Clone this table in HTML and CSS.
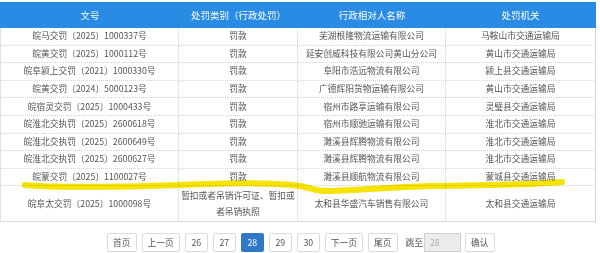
FILE: index.html
```html
<!DOCTYPE html>
<html lang="zh-CN">
<head>
<meta charset="utf-8">
<title>处罚列表</title>
<link rel="stylesheet" href="styles.css">
</head>
<body>
<div class="page">
  <div class="table">
    <div class="row head">
      <div class="c">文号</div>
      <div class="c">处罚类别（行政处罚）</div>
      <div class="c">行政相对人名称</div>
      <div class="c">处罚机关</div>
    </div>
    <div class="row">
      <div class="c">皖马交罚〔2025〕1000337号</div>
      <div class="c">罚款</div>
      <div class="c">芜湖根隆物流运输有限公司</div>
      <div class="c">马鞍山市交通运输局</div>
    </div>
    <div class="row">
      <div class="c">皖黄交罚〔2025〕1000112号</div>
      <div class="c">罚款</div>
      <div class="c">延安创威科技有限公司黄山分公司</div>
      <div class="c">黄山市交通运输局</div>
    </div>
    <div class="row">
      <div class="c">皖阜颍上交罚〔2021〕1000330号</div>
      <div class="c">罚款</div>
      <div class="c">阜阳市浩远物流有限公司</div>
      <div class="c">颍上县交通运输局</div>
    </div>
    <div class="row">
      <div class="c">皖黄交罚〔2024〕5000123号</div>
      <div class="c">罚款</div>
      <div class="c">广德辉阳货物运输有限公司</div>
      <div class="c">黄山市交通运输局</div>
    </div>
    <div class="row">
      <div class="c">皖宿灵交罚〔2025〕1000433号</div>
      <div class="c">罚款</div>
      <div class="c">宿州市路享运输有限公司</div>
      <div class="c">灵璧县交通运输局</div>
    </div>
    <div class="row">
      <div class="c">皖淮北交执罚〔2025〕2600618号</div>
      <div class="c">罚款</div>
      <div class="c">宿州市顺驰运输有限公司</div>
      <div class="c">淮北市交通运输局</div>
    </div>
    <div class="row">
      <div class="c">皖淮北交执罚〔2025〕2600649号</div>
      <div class="c">罚款</div>
      <div class="c">濉溪县辉腾物流有限公司</div>
      <div class="c">淮北市交通运输局</div>
    </div>
    <div class="row">
      <div class="c">皖淮北交执罚〔2025〕2600627号</div>
      <div class="c">罚款</div>
      <div class="c">濉溪县辉腾物流有限公司</div>
      <div class="c">淮北市交通运输局</div>
    </div>
    <div class="row">
      <div class="c">皖蒙交罚〔2025〕1100027号</div>
      <div class="c">罚款</div>
      <div class="c">濉溪县顺航物流有限公司</div>
      <div class="c">蒙城县交通运输局</div>
    </div>
    <div class="row tall">
      <div class="c">皖阜太交罚〔2025〕1000098号</div>
      <div class="c">暂扣或者吊销许可证、暂扣或者吊销执照</div>
      <div class="c">太和县华盛汽车销售有限公司</div>
      <div class="c">太和县交通运输局</div>
    </div>
  </div>

  <div class="pager">
    <span class="btn">首页</span>
    <span class="btn">上一页</span>
    <span class="btn num">26</span>
    <span class="btn num">27</span>
    <span class="btn num active">28</span>
    <span class="btn num">29</span>
    <span class="btn num">30</span>
    <span class="btn">下一页</span>
    <span class="btn">尾页</span>
    <span class="jump">跳至</span>
    <span class="input">28</span>
    <span class="btn confirm">确认</span>
  </div>

  <svg class="mark" width="600" height="253" viewBox="0 0 600 253">
    <path d="M25,185 C60,188 120,187 180,185 C230,183 270,182 300,186 C312,188 318,192 330,191 C370,189 400,187 430,186 C480,185 530,185 562,182" fill="none" stroke="#f7e300" stroke-width="6" stroke-linecap="round"/>
  </svg>
</div>
</body>
</html>
```

FILE: styles.css
```css
* { box-sizing: border-box; }

body {
  margin: 0;
  padding-top: 2px;
  background: #fff;
  font-family: "Noto Sans CJK SC", "Microsoft YaHei", sans-serif;
  color: #555;
}

.page {
  position: relative;
  width: 600px;
}

.table {
  width: 596px;
}

.row {
  display: grid;
  grid-template-columns: 178px 119px 148px 149px;
  height: 17.6px;
  border-left: 1px solid #e2e2e2;
  border-right: 1px solid #d6d6d6;
  border-bottom: 1px dotted #d4d4d4;
  font-size: 8.75px;
}

.row .c {
  display: flex;
  align-items: center;
  justify-content: center;
  text-align: center;
  padding: 0 2px;
  line-height: 16px;
  border-right: 1px dotted #d4d4d4;
  white-space: nowrap;
}

.row .c:last-child {
  border-right: none;
}

.row.head {
  height: 26px;
  background: #2a8be4;
  border-color: #2a8be4;
  border-bottom: none;
  color: #fff;
  font-size: 9.5px;
}

.row.head .c {
  border-right: none;
}

.row.tall {
  height: 35.6px;
  border-bottom: 1px solid #dcdcdc;
}

.row.tall .c {
  white-space: normal;
}

.pager {
  display: flex;
  align-items: center;
  gap: 5px;
  margin-top: 11px;
  padding-left: 107px;
  font-size: 8.75px;
}

.btn {
  display: inline-flex;
  align-items: center;
  justify-content: center;
  height: 19px;
  padding: 0 5px;
  border: 1px solid #dcdcdc;
  border-radius: 2px;
  background: #fff;
  color: #555;
}

.btn.num {
  width: 23px;
  padding: 0;
}

.btn.active {
  background: #3079c9;
  border-color: #3079c9;
  color: #fff;
}

.jump {
  margin-left: 3px;
  color: #555;
}

.input {
  display: inline-flex;
  align-items: center;
  width: 37px;
  height: 19px;
  margin-left: -4px;
  padding-left: 5px;
  border: 1px solid #d0d0d0;
  background: #ececec;
  color: #aaa;
}

.confirm {
  margin-left: -1px;
}

.mark {
  position: absolute;
  left: 0;
  top: -2px;
  pointer-events: none;
  mix-blend-mode: multiply;
}
```
